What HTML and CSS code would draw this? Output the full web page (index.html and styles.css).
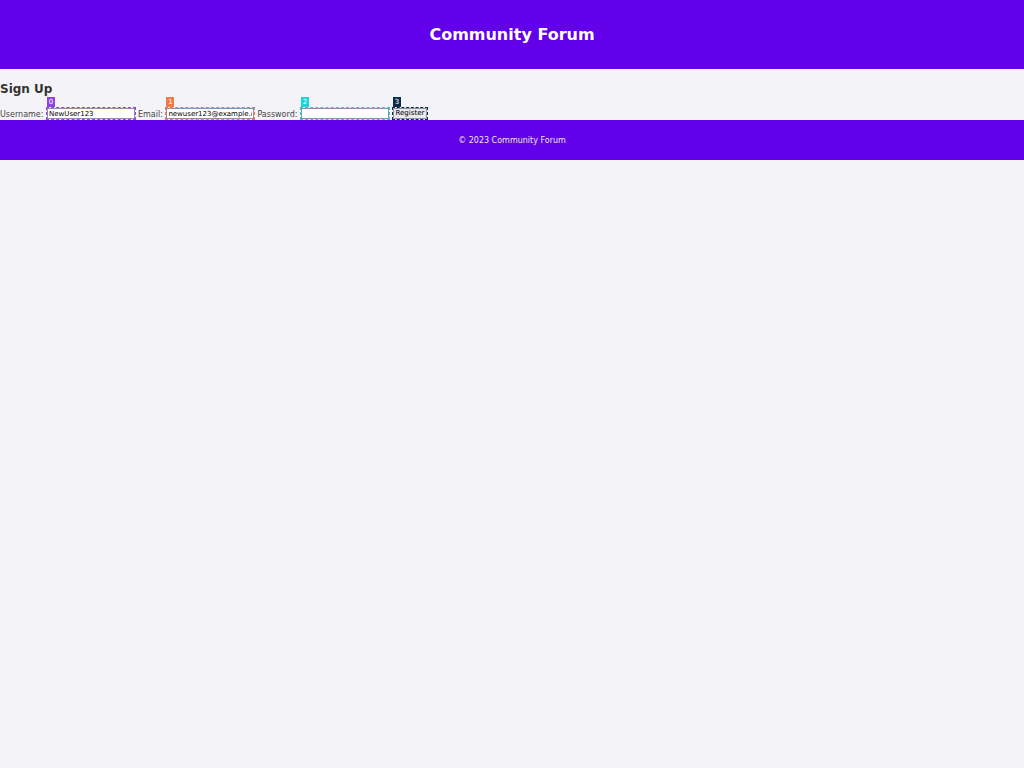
FILE: index.html
```html
<!DOCTYPE html>
<html lang="en">
<head>
<meta charset="utf-8">
<title>Community Forum - Sign Up</title>
<link rel="stylesheet" href="styles.css">
</head>
<body>
<header class="site-header">
  <h1 class="site-title">Community Forum</h1>
</header>
<main class="content">
  <h2 class="section-title">Sign Up</h2>
  <form class="signup-form">
    <label class="form-label">Username:</label>
    <span class="field field-0"><span class="badge badge-0">0</span><input class="text-input" type="text" value="NewUser123"></span>
    <label class="form-label">Email:</label>
    <span class="field field-1"><span class="badge badge-1">1</span><input class="text-input" type="email" value="newuser123@example.com"></span>
    <label class="form-label">Password:</label>
    <span class="field field-2"><span class="badge badge-2">2</span><input class="text-input" type="password" value=""></span>
    <span class="field field-3"><span class="badge badge-3">3</span><button class="submit-btn" type="button">Register</button></span>
  </form>
</main>
<footer class="site-footer">
  <p class="footer-text">© 2023 Community Forum</p>
</footer>
</body>
</html>
```

FILE: styles.css
```css
html, body {
  margin: 0;
  padding: 0;
}

body {
  background: #f4f3f8;
  font-family: "DejaVu Sans", sans-serif;
  color: #333333;
}

.site-header {
  background: #6200ea;
  color: #ffffff;
  text-align: center;
  padding: 25px 0;
}

.site-title {
  margin: 0;
  font-size: 16px;
  line-height: 19px;
  font-weight: bold;
}

.section-title {
  margin: 12px 0 10px;
  font-size: 12px;
  line-height: 16px;
  font-weight: bold;
  color: #333333;
}

.signup-form {
  display: flex;
  align-items: flex-start;
  margin: 0;
  height: 13px;
  font-size: 8px;
  color: #444444;
  white-space: nowrap;
}

.form-label {
  margin-right: 2.5px;
  padding-top: 1px;
  line-height: 13px;
}

.field {
  position: relative;
  display: block;
  flex: none;
  box-sizing: border-box;
  height: 13px;
  margin-right: 2px;
  border: 1px dashed #8e44e0;
}

.field-1 { border-color: #f07d48; }
.field-2 { border-color: #1ed3d8; }
.field-3 { border-color: #0c2d48; }

.text-input {
  display: block;
  box-sizing: border-box;
  width: 88px;
  height: 11px;
  margin: 0;
  padding: 0 1px;
  border: 1px solid #8f8f9d;
  background: #ffffff;
  font-family: "DejaVu Sans", sans-serif;
  font-size: 7px;
  line-height: 9px;
  color: #000000;
}

.submit-btn {
  display: block;
  box-sizing: border-box;
  width: 34px;
  height: 11px;
  margin: 0;
  padding: 0;
  border: 1px solid #8f8f9d;
  border-radius: 1px;
  background: #e9e9ed;
  font-family: "DejaVu Sans", sans-serif;
  font-size: 7px;
  line-height: 9px;
  text-align: center;
  color: #000000;
}

.badge {
  position: absolute;
  left: 0;
  bottom: calc(100% + 1px);
  width: 8px;
  height: 10px;
  font-size: 7px;
  line-height: 10px;
  text-align: center;
  color: #ffffff;
  background: #8e44e0;
}

.badge-1 { background: #f07d48; }
.badge-2 { background: #1ed3d8; }
.badge-3 { background: #0c2d48; }

.site-footer {
  background: #6200ea;
  color: #ece6ff;
  text-align: center;
  padding: 16px 0 14px;
}

.footer-text {
  margin: 0;
  font-size: 8px;
  line-height: 10px;
}
```
